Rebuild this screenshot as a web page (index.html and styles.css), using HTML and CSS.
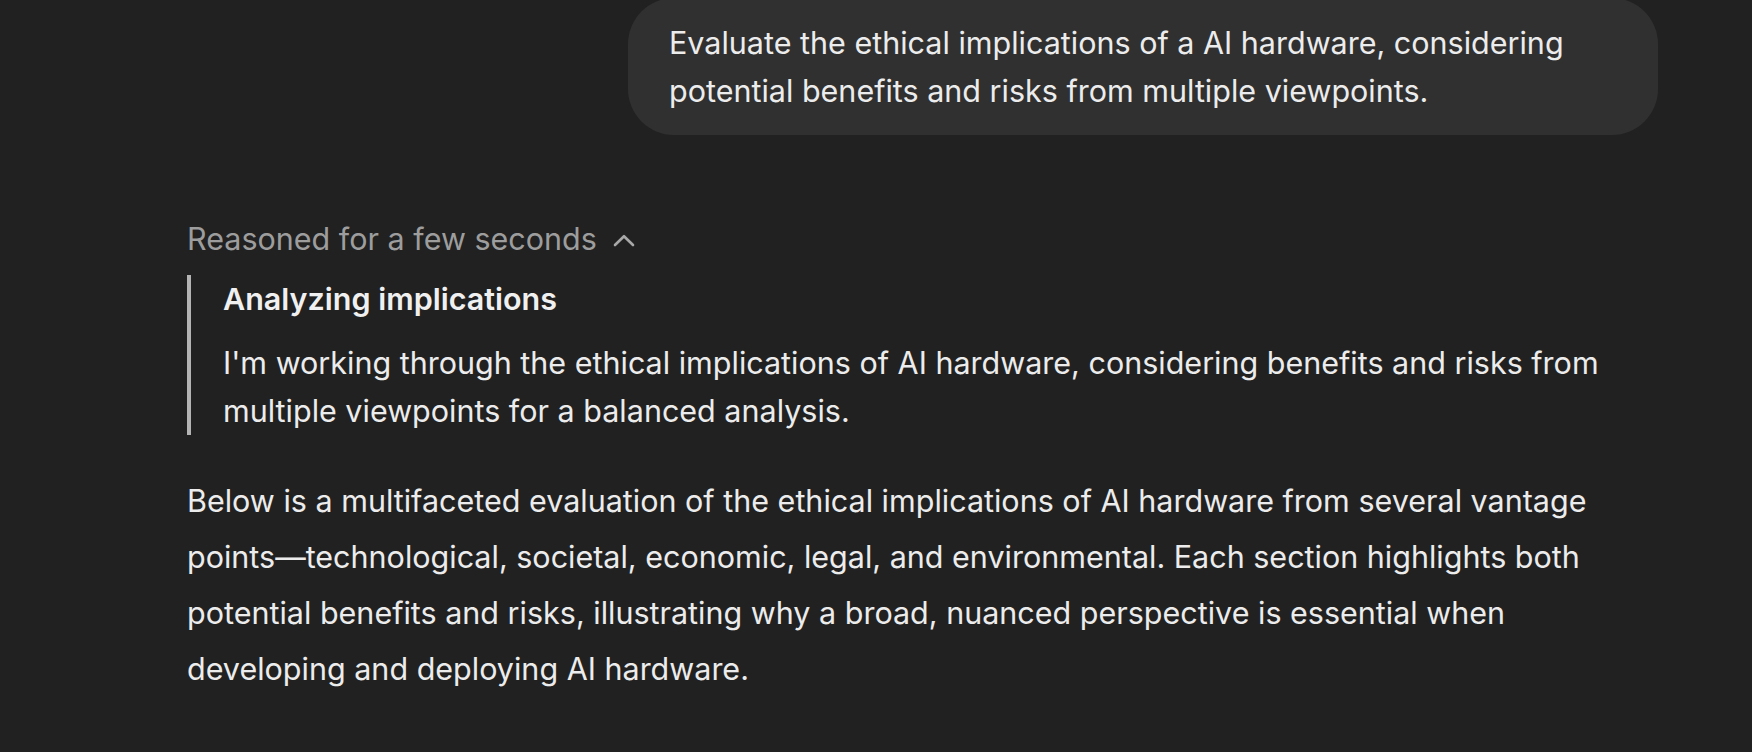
FILE: index.html
```html
<!DOCTYPE html>
<html lang="en">
<head>
<meta charset="utf-8">
<title>Chat</title>
<link rel="stylesheet" href="styles.css">
</head>
<body>
<main class="thread">
  <div class="user-row">
    <div class="bubble">Evaluate the ethical implications of a AI hardware, considering potential benefits and risks from multiple viewpoints.</div>
  </div>
  <div class="assistant">
    <div class="reasoned">
      <span>Reasoned for a few seconds</span>
      <svg class="chev" width="22" height="14" viewBox="0 0 22 14" aria-hidden="true"><path d="M2 12 L11 3.2 L20 12" fill="none" stroke="currentColor" stroke-width="2.6" stroke-linecap="round" stroke-linejoin="round"/></svg>
    </div>
    <div class="thought">
      <div class="thought-title">Analyzing implications</div>
      <p class="thought-text">I'm working through the ethical implications of AI hardware, considering benefits and risks from multiple viewpoints for a balanced analysis.</p>
    </div>
    <p class="answer">Below is a multifaceted evaluation of the ethical implications of AI hardware from several vantage points—technological, societal, economic, legal, and environmental. Each section highlights both potential benefits and risks, illustrating why a broad, nuanced perspective is essential when developing and deploying AI hardware.</p>
  </div>
</main>
</body>
</html>
```
FILE: styles.css
```css
html, body {
  margin: 0;
  padding: 0;
  background: #212121;
}
body {
  font-family: Inter, "Noto Sans", sans-serif;
  font-size: 30.5px;
  color: #ececec;
  overflow: hidden;
}
.thread {
  margin-left: 187px;
  width: 1471px;
}
.user-row {
  display: flex;
  justify-content: flex-end;
  margin-top: -2px;
}
.bubble {
  background: #303030;
  border-radius: 46px;
  padding: 21px 41px 20px 41px;
  line-height: 48px;
  width: 948px;
}
.assistant {
  margin-top: 80px;
}
.reasoned {
  display: flex;
  align-items: center;
  gap: 16px;
  color: #9d9d9d;
  line-height: 48px;
}
.chev {
  display: block;
  color: #a8a8a8;
  margin-top: 2px;
}
.thought {
  margin-top: 12px;
  border-left: 4px solid #b4b4b4;
  padding-left: 32px;
  line-height: 48px;
}
.thought-title {
  font-weight: 600;
  color: #f0f0f0;
}
.thought-text {
  margin: 16px 0 0 0;
}
.answer {
  margin: 38px 0 0 0;
  line-height: 56px;
}
```
